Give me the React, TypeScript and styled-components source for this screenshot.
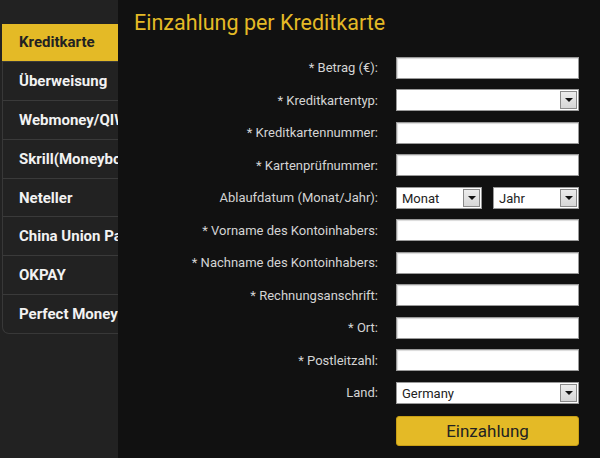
import styled, { createGlobalStyle } from "styled-components";

const GlobalStyle = createGlobalStyle`
  html, body {
    margin: 0;
    padding: 0;
    background: #111111;
    font-family: Roboto, "Liberation Sans", Arial, sans-serif;
  }
`;

const Page = styled.div`
  display: flex;
  width: 600px;
  height: 458px;
  overflow: hidden;
`;

const Sidebar = styled.nav`
  width: 118px;
  flex-shrink: 0;
  background: #222222;
  padding-top: 23.5px;
  overflow: hidden;
`;

const Menu = styled.ul`
  list-style: none;
  margin: 0 0 0 2px;
  padding: 0;
  border-left: 1px solid #383838;
  border-bottom: 1px solid #383838;
  border-bottom-left-radius: 7px;
`;

const MenuItem = styled.li<{ $active?: boolean }>`
  display: flex;
  align-items: center;
  height: 37.8px;
  border-bottom: 1px solid #3a3a3a;
  background: ${(p) => (p.$active ? "#e4ba26" : "transparent")};
  color: ${(p) => (p.$active ? "#222222" : "#f2f2f2")};
  font-size: 15px;
  font-weight: 700;
  white-space: nowrap;
  margin-left: ${(p) => (p.$active ? "-1px" : "0")};
  padding-left: ${(p) => (p.$active ? "17px" : "16px")};

  &:last-child {
    border-bottom: none;
  }
`;

const Main = styled.main`
  flex: 1;
  background: #111111;
  padding-top: 9px;
`;

const Title = styled.h1`
  margin: 0 0 0 16px;
  font-size: 21.5px;
  font-weight: 400;
  color: #e4ba26;
  line-height: 28px;
`;

const Form = styled.form`
  display: grid;
  grid-template-columns: 260px 183px;
  column-gap: 18px;
  row-gap: 10.5px;
  margin-top: 19.5px;
  align-items: center;
`;

const Label = styled.label`
  text-align: right;
  font-size: 13px;
  color: #d4d4d4;
  white-space: nowrap;
`;

const Input = styled.input`
  box-sizing: border-box;
  width: 183px;
  height: 22px;
  margin: 0;
  border: 1px solid #9a9a9a;
  box-shadow: inset 1px 1px 1px rgba(0, 0, 0, 0.15);
  background: #ffffff;
  padding: 0 4px;
`;

const SelectBox = styled.div<{ $width: number }>`
  box-sizing: border-box;
  display: flex;
  align-items: center;
  width: ${(p) => p.$width}px;
  height: 22px;
  border: 1px solid #9a9a9a;
  background: #ffffff;
  padding: 1px;
  font-size: 13px;
  color: #222222;
`;

const SelectText = styled.span`
  flex: 1;
  padding-left: 4px;
  padding-top: 1px;
`;

const Arrow = styled.span`
  box-sizing: border-box;
  display: flex;
  align-items: center;
  justify-content: center;
  width: 17px;
  height: 18px;
  border: 1px solid #8a8a8a;
  background: linear-gradient(#ececec, #d6d6d6);

  &::after {
    content: "";
    border-left: 4px solid transparent;
    border-right: 4px solid transparent;
    border-top: 4px solid #111111;
  }
`;

const DatePair = styled.div`
  display: flex;
  gap: 11px;
`;

const Submit = styled.button`
  box-sizing: border-box;
  width: 183px;
  height: 30px;
  margin-top: 2px;
  border: 1px solid #c99f14;
  border-radius: 3px;
  background: #e4ba26;
  color: #222222;
  font-family: Roboto, "Liberation Sans", Arial, sans-serif;
  font-size: 17px;
  cursor: pointer;
`;

const menu = [
  "Kreditkarte",
  "Überweisung",
  "Webmoney/QIWI",
  "Skrill(Moneybookers)",
  "Neteller",
  "China Union Pay",
  "OKPAY",
  "Perfect Money",
];

const fields = [
  "* Betrag (€):",
  "* Kreditkartentyp:",
  "* Kreditkartennummer:",
  "* Kartenprüfnummer:",
  "Ablaufdatum (Monat/Jahr):",
  "* Vorname des Kontoinhabers:",
  "* Nachname des Kontoinhabers:",
  "* Rechnungsanschrift:",
  "* Ort:",
  "* Postleitzahl:",
  "Land:",
];

function Select({ value, width }: { value?: string; width: number }) {
  return (
    <SelectBox $width={width}>
      <SelectText>{value}</SelectText>
      <Arrow />
    </SelectBox>
  );
}

function Field({ index }: { index: number }) {
  if (index === 1) return <Select width={183} />;
  if (index === 4)
    return (
      <DatePair>
        <Select value="Monat" width={86} />
        <Select value="Jahr" width={86} />
      </DatePair>
    );
  if (index === 10) return <Select value="Germany" width={183} />;
  return <Input type="text" />;
}

export default function App() {
  return (
    <Page>
      <GlobalStyle />
      <Sidebar>
        <Menu>
          {menu.map((m, i) => (
            <MenuItem key={m} $active={i === 0}>
              {m}
            </MenuItem>
          ))}
        </Menu>
      </Sidebar>
      <Main>
        <Title>Einzahlung per Kreditkarte</Title>
        <Form onSubmit={(e) => e.preventDefault()}>
          {fields.map((f, i) => (
            <>
              <Label key={f + "l"}>{f}</Label>
              <Field key={f + "f"} index={i} />
            </>
          ))}
          <span />
          <Submit type="submit">Einzahlung</Submit>
        </Form>
      </Main>
    </Page>
  );
}
